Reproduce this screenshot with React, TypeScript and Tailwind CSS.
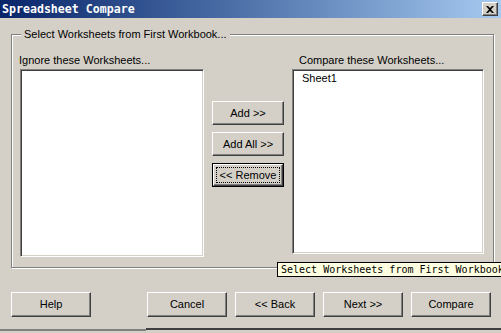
import React from "react";

const btn3d =
  "border border-t-white border-l-white border-r-[#404040] border-b-[#404040] shadow-[inset_-1px_-1px_0_#808080] bg-[#d4d0c8] flex items-center justify-center text-black";

function Btn({ label, className }: { label: string; className: string }) {
  return <div className={`${btn3d} ${className}`}>{label}</div>;
}

export default function App() {
  return (
    <div
      className="w-[501px] h-[333px] bg-[#d4d0c8] overflow-hidden flex flex-col relative text-[11px] leading-[13px] text-black"
      style={{ fontFamily: '"Liberation Sans", Arial, sans-serif' }}
    >
      {/* Title bar */}
      <div className="h-[18px] flex items-center bg-gradient-to-r from-[#0a246a] to-[#a6caf0]">
        <div
          className="ml-[2px] flex-1 text-white font-bold text-[11.6px] leading-[14px]"
          style={{ fontFamily: '"DejaVu Sans Mono", "Liberation Mono", monospace' }}
        >
          Spreadsheet Compare
        </div>
        <div className="mr-[3px] w-[16px] h-[14px] border border-t-white border-l-white border-r-[#404040] border-b-[#404040] shadow-[inset_-1px_-1px_0_#808080] bg-[#d4d0c8] flex items-center justify-center">
          <svg width="8" height="7" viewBox="0 0 8 7">
            <path d="M0 0h2l2 2 2-2h2L5 3.5 8 7H6L4 5 2 7H0l3-3.5z" fill="#000" />
          </svg>
        </div>
      </div>

      {/* Group box */}
      <div className="mt-[16px] ml-[11px] w-[483px] h-[234px] border border-[#808080] shadow-[inset_1px_1px_0_#fff,1px_1px_0_#fff] flex flex-col">
        <div className="-mt-[7px] ml-[9px] self-start px-[3px] bg-[#d4d0c8]">
          Select Worksheets from First Workbook...
        </div>
        <div className="mt-[13px] flex">
          {/* Left column */}
          <div className="ml-[7px] flex flex-col">
            <div className="h-[13px]">Ignore these Worksheets...</div>
            <div className="mt-[2px] ml-[1px] w-[184px] h-[188px] bg-white border border-t-[#808080] border-l-[#808080] border-r-white border-b-white shadow-[inset_1px_1px_0_#404040,inset_-1px_-1px_0_#d4d0c8]" />
          </div>
          {/* Middle buttons */}
          <div className="ml-[8px] mt-[47px] flex flex-col gap-[7px]">
            <Btn label="Add >>" className="w-[72px] h-[24px]" />
            <Btn label="Add All >>" className="w-[72px] h-[24px]" />
            <div className="w-[72px] h-[24px] border border-black">
              <div className={`${btn3d} w-full h-full p-[2px]`}>
                <div className="w-full h-full border border-dotted border-black flex items-center justify-center">
                  &lt;&lt; Remove
                </div>
              </div>
            </div>
          </div>
          {/* Right column */}
          <div className="ml-[8px] flex flex-col">
            <div className="h-[13px] ml-[7px]">Compare these Worksheets...</div>
            <div className="mt-[2px] w-[192px] h-[185px] bg-white border border-t-[#808080] border-l-[#808080] border-r-white border-b-white shadow-[inset_1px_1px_0_#404040,inset_-1px_-1px_0_#d4d0c8] pl-[9px] pt-[2px]">
              Sheet1
            </div>
          </div>
        </div>
      </div>

      {/* Bottom buttons */}
      <div className="mt-[24px] flex">
        <Btn label="Help" className="ml-[11px] w-[80px] h-[25px]" />
        <Btn label="Cancel" className="ml-[56px] w-[80px] h-[25px]" />
        <Btn label="<< Back" className="ml-[8px] w-[80px] h-[25px]" />
        <Btn label="Next >>" className="ml-[8px] w-[80px] h-[25px]" />
        <Btn label="Compare" className="ml-[8px] w-[80px] h-[25px]" />
      </div>

      {/* Bottom edge */}
      <div className="mt-[11px] flex">
        <div className="w-[146px] h-[2px] mt-[1px] bg-[#808080]" />
        <div className="flex-1 h-[2px] bg-[#404040]" />
      </div>

      {/* Tooltip */}
      <div
        className="absolute left-[277px] top-[262px] h-[15px] pl-[3px] pr-[6px] bg-[#ffffe1] border border-black whitespace-nowrap text-[10px] leading-[13px]"
        style={{ fontFamily: '"DejaVu Sans Mono", "Liberation Mono", monospace' }}
      >
        Select Worksheets from First Workbook
      </div>
    </div>
  );
}
